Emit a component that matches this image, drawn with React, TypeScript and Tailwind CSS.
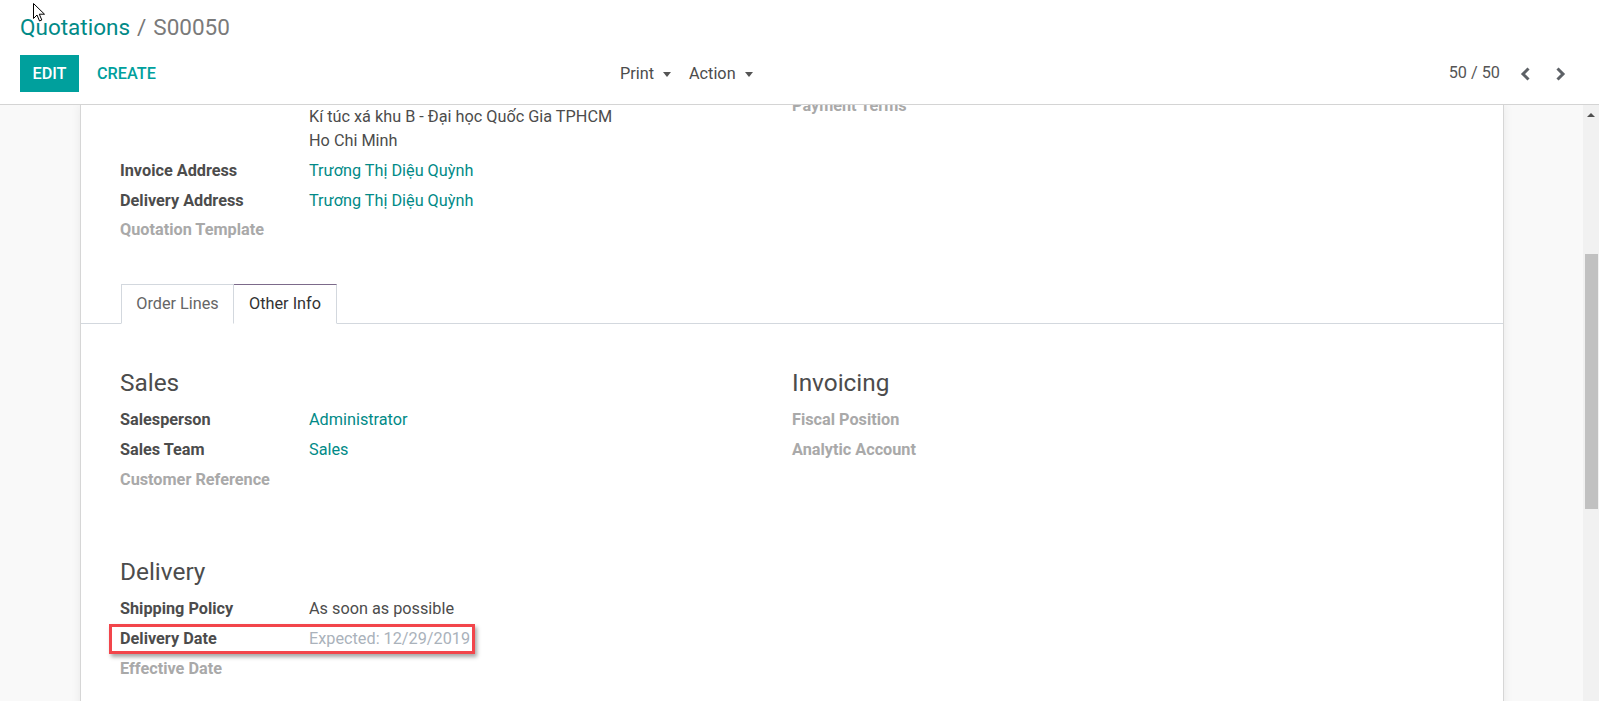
import React from 'react'

type FieldProps = {
  label: string
  value?: string
  empty?: boolean
  tone?: 'link' | 'text' | 'muted'
  boxed?: boolean
}

function Field({ label, value, empty, tone = 'text', boxed }: FieldProps) {
  const valueColor =
    tone === 'link' ? 'text-[#018a87]' : tone === 'muted' ? 'text-[#aab2bb]' : 'text-[#4c4c4c]'
  return (
    <div className="relative flex h-[29.8px] items-center">
      <div className={`w-[189px] shrink-0 font-bold ${empty ? 'text-[#a9a9a9]' : 'text-[#4c4c4c]'}`}>
        {label}
      </div>
      {value && <div className={valueColor}>{value}</div>}

      {/* highlight annotation */}
      {boxed && (
        <div className="pointer-events-none absolute left-[-11px] top-[0px] h-[30px] w-[366px] border-[3px] border-[#f2454b] shadow-[2px_3px_4px_rgba(0,0,0,0.35)]" />
      )}
    </div>
  )
}

function Heading({ children }: { children: React.ReactNode }) {
  return <div className="h-[28px] text-[24.4px] leading-[28px] text-[#4c4c4c]">{children}</div>
}

function Caret() {
  return <span className="ml-[9px] inline-block border-x-[4px] border-t-[5px] border-x-transparent border-t-[#555]" />
}

function Chevron({ dir }: { dir: 'left' | 'right' }) {
  return (
    <svg width="11" height="14" viewBox="0 0 11 14">
      <polyline
        points={dir === 'left' ? '8.5,1.5 3,7 8.5,12.5' : '2.5,1.5 8,7 2.5,12.5'}
        fill="none"
        stroke="#5d6166"
        strokeWidth="3"
      />
    </svg>
  )
}

function Cursor() {
  return (
    <svg className="absolute left-[33px] top-[3px]" width="13" height="19" viewBox="0 0 13 19">
      <path
        d="M0.5 0.5 L0.5 15.5 L4 12 L6.5 18 L8.8 17 L6.3 11.2 L11.5 11.2 Z"
        fill="#fff"
        stroke="#000"
        strokeWidth="1"
        strokeLinejoin="round"
      />
    </svg>
  )
}

export default function App() {
  return (
    <div className="relative h-[701px] w-[1599px] overflow-hidden bg-white font-['Roboto',sans-serif] text-[16.25px] text-[#4c4c4c]">
      {/* Control panel */}
      <header className="h-[105px] border-b border-[#d4d4d4] bg-white px-[20px]">
        <div className="flex h-[53px] items-center pt-[3px] text-[22.5px]">
          <span className="text-[#018a87]">Quotations</span>
          <span className="mx-[7px] text-[#777]">/</span>
          <span className="text-[#7a7a7a]">S00050</span>
        </div>
        <div className="mt-[2px] flex h-[37px] items-center">
          <div className="flex w-[600px] items-center">
            <div className="flex h-[37px] w-[59px] items-center justify-center bg-[#00a09d] pt-[1px] font-medium text-white">
              EDIT
            </div>
            <div className="ml-[18px] pt-[1px] font-medium text-[#00a09d]">CREATE</div>
          </div>
          <div className="flex items-center pt-[1px]">
            <span>Print</span>
            <Caret />
            <span className="ml-[18px]">Action</span>
            <Caret />
          </div>
          <div className="ml-auto mr-[13px] flex items-center">
            <span className="text-[#555]">50 / 50</span>
            <span className="ml-[20px]">
              <Chevron dir="left" />
            </span>
            <span className="ml-[24px]">
              <Chevron dir="right" />
            </span>
          </div>
        </div>
      </header>

      {/* Form view */}
      <div className="flex h-[596px]">
        <div className="flex-1 overflow-hidden bg-[#f9f9f9]">
          <div className="ml-[80px] min-h-[700px] w-[1424px] border-x border-[#d6d6d6] bg-white shadow-[0_0_10px_rgba(0,0,0,0.07)]">
            {/* Header groups */}
            <div className="grid grid-cols-2 px-[39px]">
              <div>
                <div className="pl-[189px] leading-[24px]">
                  <div>Kí túc xá khu B - Đại học Quốc Gia TPHCM</div>
                  <div>Ho Chi Minh</div>
                </div>
                <div className="mt-[3px]">
                  <Field label="Invoice Address" value="Trương Thị Diệu Quỳnh" tone="link" />
                  <Field label="Delivery Address" value="Trương Thị Diệu Quỳnh" tone="link" />
                  <Field label="Quotation Template" empty />
                </div>
              </div>
              <div className="mt-[-14px]">
                <Field label="Payment Terms" empty />
              </div>
            </div>

            {/* Notebook */}
            <div className="mt-[39px] flex h-[40px] items-end border-b border-[#d3d8de] px-[40px]">
              <div className="mb-[-1px] flex h-[40px] w-[113px] items-center justify-center border border-[#d3d8de] border-b-transparent bg-white text-[#666]">
                Order Lines
              </div>
              <div className="mb-[-1px] flex h-[40px] w-[103px] items-center justify-center border border-l-0 border-[#d3d8de] border-t-[#7c6a8a] border-b-white bg-white text-[#333]">
                Other Info
              </div>
            </div>

            <div className="grid grid-cols-2 px-[39px]">
              <div>
                <div className="mt-[45px]">
                  <Heading>Sales</Heading>
                </div>
                <div className="mt-[8px]">
                  <Field label="Salesperson" value="Administrator" tone="link" />
                  <Field label="Sales Team" value="Sales" tone="link" />
                  <Field label="Customer Reference" empty />
                </div>
              </div>
              <div>
                <div className="mt-[45px]">
                  <Heading>Invoicing</Heading>
                </div>
                <div className="mt-[8px]">
                  <Field label="Fiscal Position" empty />
                  <Field label="Analytic Account" empty />
                </div>
              </div>
            </div>

            <div className="px-[39px]">
              <div className="mt-[63.5px]">
                <Heading>Delivery</Heading>
              </div>
              <div className="mt-[8px]">
                <Field label="Shipping Policy" value="As soon as possible" />
                <Field label="Delivery Date" value="Expected: 12/29/2019" tone="muted" boxed />
                <Field label="Effective Date" empty />
              </div>
            </div>
          </div>
        </div>

        {/* Scrollbar */}
        <div className="flex w-[16px] flex-col items-center bg-[#f1f1f1]">
          <div className="mt-[8px] border-x-[4px] border-b-[4px] border-x-transparent border-b-[#505050]" />
          <div className="ml-[1px] mt-[137px] h-[255px] w-[13px] bg-[#c1c1c1]" />
        </div>
      </div>

      <Cursor />
    </div>
  )
}
